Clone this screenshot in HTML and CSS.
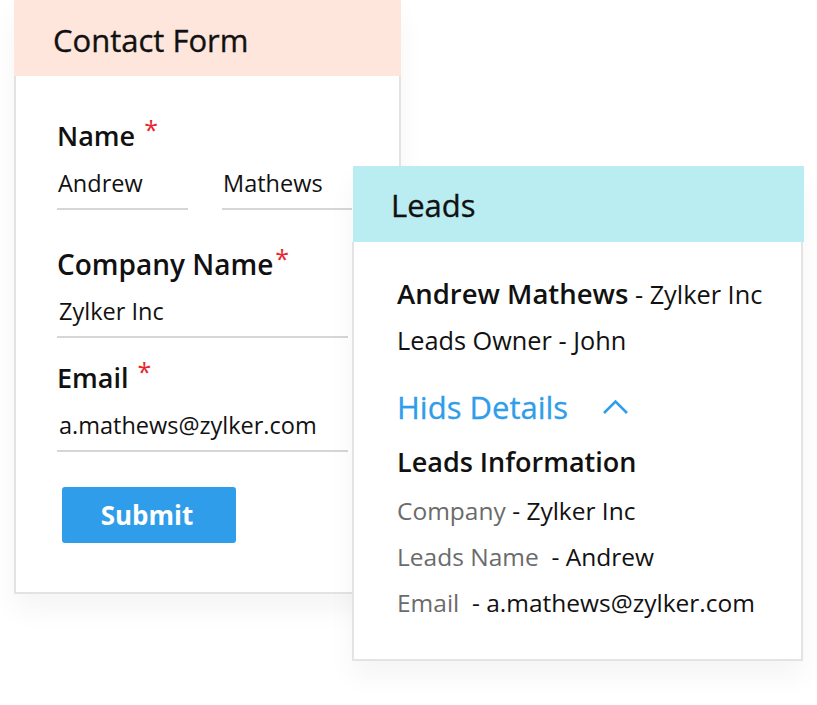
FILE: index.html
```html
<!DOCTYPE html>
<html lang="en">
<head>
    <meta charset="UTF-8">
    <meta name="viewport" content="width=device-width, initial-scale=1.0">
    <title>Contact Form to Leads</title>
    <link rel="stylesheet" href="styles.css">
</head>
<body>
    <div class="stage">
        <div class="card contact-card">
            <div class="card-header contact-header">Contact Form</div>
            <form class="card-body contact-body">
                <div class="field-label">Name <span class="req">*</span></div>
                <div class="name-row">
                    <div class="field-input">Andrew</div>
                    <div class="field-input">Mathews</div>
                </div>

                <div class="field-label gap-lg">Company Name<span class="req">*</span></div>
                <div class="field-input">Zylker Inc</div>

                <div class="field-label gap-sm">Email <span class="req">*</span></div>
                <div class="field-input">a.mathews@zylker.com</div>

                <button type="button" class="submit-btn">Submit</button>
            </form>
        </div>

        <div class="card leads-card">
            <div class="card-header leads-header">Leads</div>
            <div class="card-body leads-body">
                <div class="lead-row top-row"><strong>Andrew Mathews</strong> - Zylker Inc</div>
                <div class="lead-row top-row">Leads Owner - John</div>

                <div class="toggle-row">
                    Hids Details
                    <svg class="chevron" width="28" height="18" viewBox="0 0 28 18">
                        <polyline points="2,15 13.5,3.5 25,15" fill="none" stroke="#2f9de9" stroke-width="2.6"/>
                    </svg>
                </div>

                <div class="info-title">Leads Information</div>
                <div class="lead-row"><span class="muted">Company</span> - Zylker Inc</div>
                <div class="lead-row"><span class="muted">Leads Name</span>&nbsp; - Andrew</div>
                <div class="lead-row"><span class="muted">Email</span>&nbsp; - a.mathews@zylker.com</div>
            </div>
        </div>
    </div>
</body>
</html>
```

FILE: styles.css
```css
body {
    margin: 0;
    background: #ffffff;
    font-family: "Open Sans", "Liberation Sans", sans-serif;
    color: #111111;
}
.stage {
    position: relative;
    width: 817px;
    height: 705px;
    overflow: hidden;
}
.card {
    background: #ffffff;
    box-shadow: 0 16px 26px rgba(0, 0, 0, 0.045);
}
.card-header {
    height: 76px;
    box-sizing: border-box;
    font-size: 31px;
    white-space: nowrap;
    -webkit-text-stroke: 0.35px #111111;
}
.card-body {
    border: 2px solid #e3e3e3;
    border-top: none;
}

/* contact form */
.contact-card {
    width: 387px;
    margin-left: 14px;
}
.contact-header {
    background-color: #fee6dc;
    padding: 4px 0 0 39px;
    line-height: 72px;
}
.contact-body {
    margin: 0;
    padding: 42px 51px 49px 41px;
}
.field-label {
    font-size: 27px;
    font-weight: 600;
    line-height: 36px;
    white-space: nowrap;
}
.field-label.gap-lg {
    margin-top: 36px;
    font-size: 28px;
}
.gap-sm {
    margin-top: 22px;
}
.req {
    color: #e9252e;
    font-size: 25px;
    font-weight: 400;
    vertical-align: 7px;
    line-height: 0;
    margin-left: 2px;
}
.field-input {
    margin-top: 13px;
    padding: 0 0 9px 2px;
    font-size: 23.5px;
    line-height: 32px;
    border-bottom: 2px solid #d6d6d6;
    white-space: nowrap;
}
.name-row {
    display: grid;
    grid-template-columns: 131px 131px;
    gap: 34px;
}
.name-row .field-input {
    padding-left: 1px;
}
.submit-btn {
    display: block;
    margin: 35px 0 0 5px;
    width: 174px;
    height: 56px;
    border: none;
    border-radius: 3px;
    background-color: #2f9de9;
    color: #ffffff;
    font-family: inherit;
    font-size: 26px;
    font-weight: 700;
    padding: 0 4px 0 0;
}

/* leads */
.leads-card {
    position: absolute;
    left: 352px;
    top: 166px;
    width: 451px;
}
.leads-header {
    background-color: #baedf1;
    padding: 2px 0 0 38px;
    line-height: 74px;
    margin-left: 1px;
    width: 451px;
}
.leads-body {
    padding: 29px 20px 33px 43px;
}
.lead-row {
    font-size: 24.5px;
    line-height: 46px;
    white-space: nowrap;
}
.lead-row.top-row {
    font-size: 25.3px;
}
.lead-row strong {
    font-size: 27.5px;
    font-weight: 600;
}
.muted {
    color: #6b6b6b;
}
.toggle-row {
    margin-top: 21px;
    display: flex;
    align-items: center;
    gap: 34px;
    font-size: 31px;
    line-height: 46px;
    color: #2f9de9;
    -webkit-text-stroke: 0.3px #2f9de9;
}
.info-title {
    margin-top: 9px;
    font-size: 27px;
    font-weight: 600;
    line-height: 46px;
}
.info-title + .lead-row {
    margin-top: 3px;
}
```
